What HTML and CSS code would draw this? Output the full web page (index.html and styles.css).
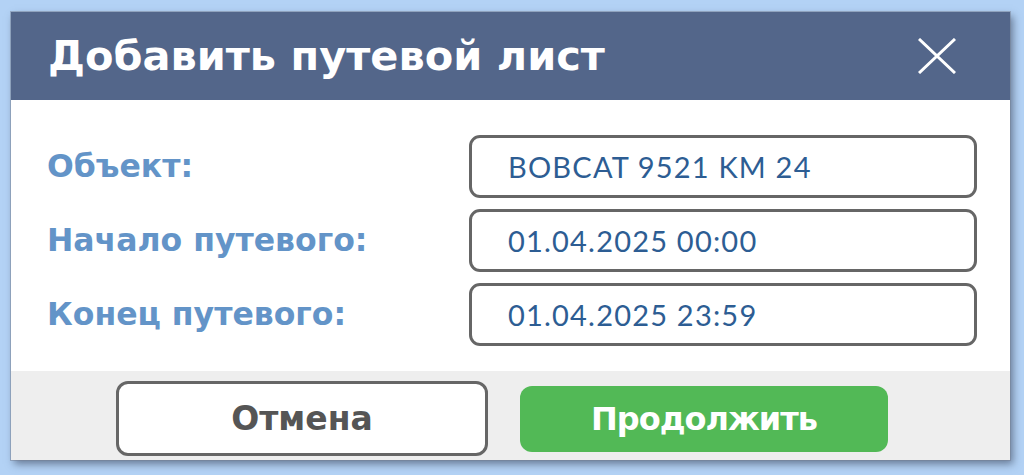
FILE: index.html
```html
<!DOCTYPE html>
<html lang="ru">
<head>
<meta charset="utf-8">
<title>Добавить путевой лист</title>
<link rel="stylesheet" href="styles.css">
</head>
<body>
<div class="dialog">
  <div class="dialog-header">
    <h1 class="dialog-title">Добавить путевой лист</h1>
    <button class="close-btn" aria-label="Закрыть">
      <svg viewBox="0 0 38 36" width="38" height="36"><path d="M1 1 L37 35 M37 1 L1 35" stroke="#fff" stroke-width="3" fill="none"/></svg>
    </button>
  </div>
  <div class="dialog-body">
    <div class="field-label">Объект:</div>
    <div class="field-input">BOBCAT 9521 KM 24</div>
    <div class="field-label">Начало путевого:</div>
    <div class="field-input">01.04.2025 00:00</div>
    <div class="field-label">Конец путевого:</div>
    <div class="field-input">01.04.2025 23:59</div>
  </div>
  <div class="dialog-footer">
    <button class="btn btn-cancel">Отмена</button>
    <button class="btn btn-ok">Продолжить</button>
  </div>
</div>
</body>
</html>
```
FILE: styles.css
```css
html, body {
  margin: 0;
  padding: 0;
}
body {
  background: #b3d2f5;
  width: 1024px;
  height: 475px;
  overflow: hidden;
  font-family: Lato, "Open Sans", sans-serif;
}
.dialog {
  margin: 12px 0 0 11px;
  width: 999px;
  height: 448px;
  background: #fff;
  display: flex;
  flex-direction: column;
  box-shadow: 3px 4px 8px rgba(40, 50, 70, 0.55);
  outline: 1px solid rgba(120, 130, 150, 0.5);
}
.dialog-header {
  height: 88px;
  background: #53668a;
  display: flex;
  align-items: center;
  justify-content: space-between;
  padding: 0 54px 0 37px;
  flex: none;
}
.dialog-title {
  margin: 0;
  color: #fff;
  font-family: "DejaVu Sans", sans-serif;
  font-weight: 700;
  font-size: 41.5px;
  line-height: 1;
}
.close-btn {
  background: none;
  border: 0;
  padding: 0;
  width: 38px;
  height: 36px;
  display: flex;
}
.dialog-body {
  flex: 1;
  display: grid;
  grid-template-columns: 422px 508px;
  row-gap: 11px;
  align-content: start;
  align-items: center;
  padding: 35px 33px 0 36px;
}
.field-label {
  color: #6394c8;
  font-family: "DejaVu Sans", sans-serif;
  font-weight: 700;
  font-size: 31.5px;
  padding-bottom: 2px;
}
.field-input {
  height: 63px;
  box-sizing: border-box;
  border: 3px solid #666;
  border-radius: 11px;
  display: flex;
  align-items: center;
  padding-left: 36px;
  color: #2d5d93;
  font-size: 29px;
  letter-spacing: 1.2px;
}
.dialog-footer {
  height: 89px;
  box-sizing: border-box;
  flex: none;
  background: #eeeeee;
  display: flex;
  align-items: center;
  padding: 6px 0 0 105px;
  gap: 32px;
}
.btn {
  font-family: "DejaVu Sans", sans-serif;
  font-weight: 700;
  border-radius: 12px;
  cursor: pointer;
}
.btn-cancel {
  width: 372px;
  height: 75px;
  background: #fff;
  border: 3px solid #666;
  color: #555;
  font-size: 33px;
}
.btn-ok {
  width: 368px;
  height: 66px;
  background: #52b956;
  border: 0;
  color: #fff;
  font-size: 32px;
  letter-spacing: -1px;
}
```
